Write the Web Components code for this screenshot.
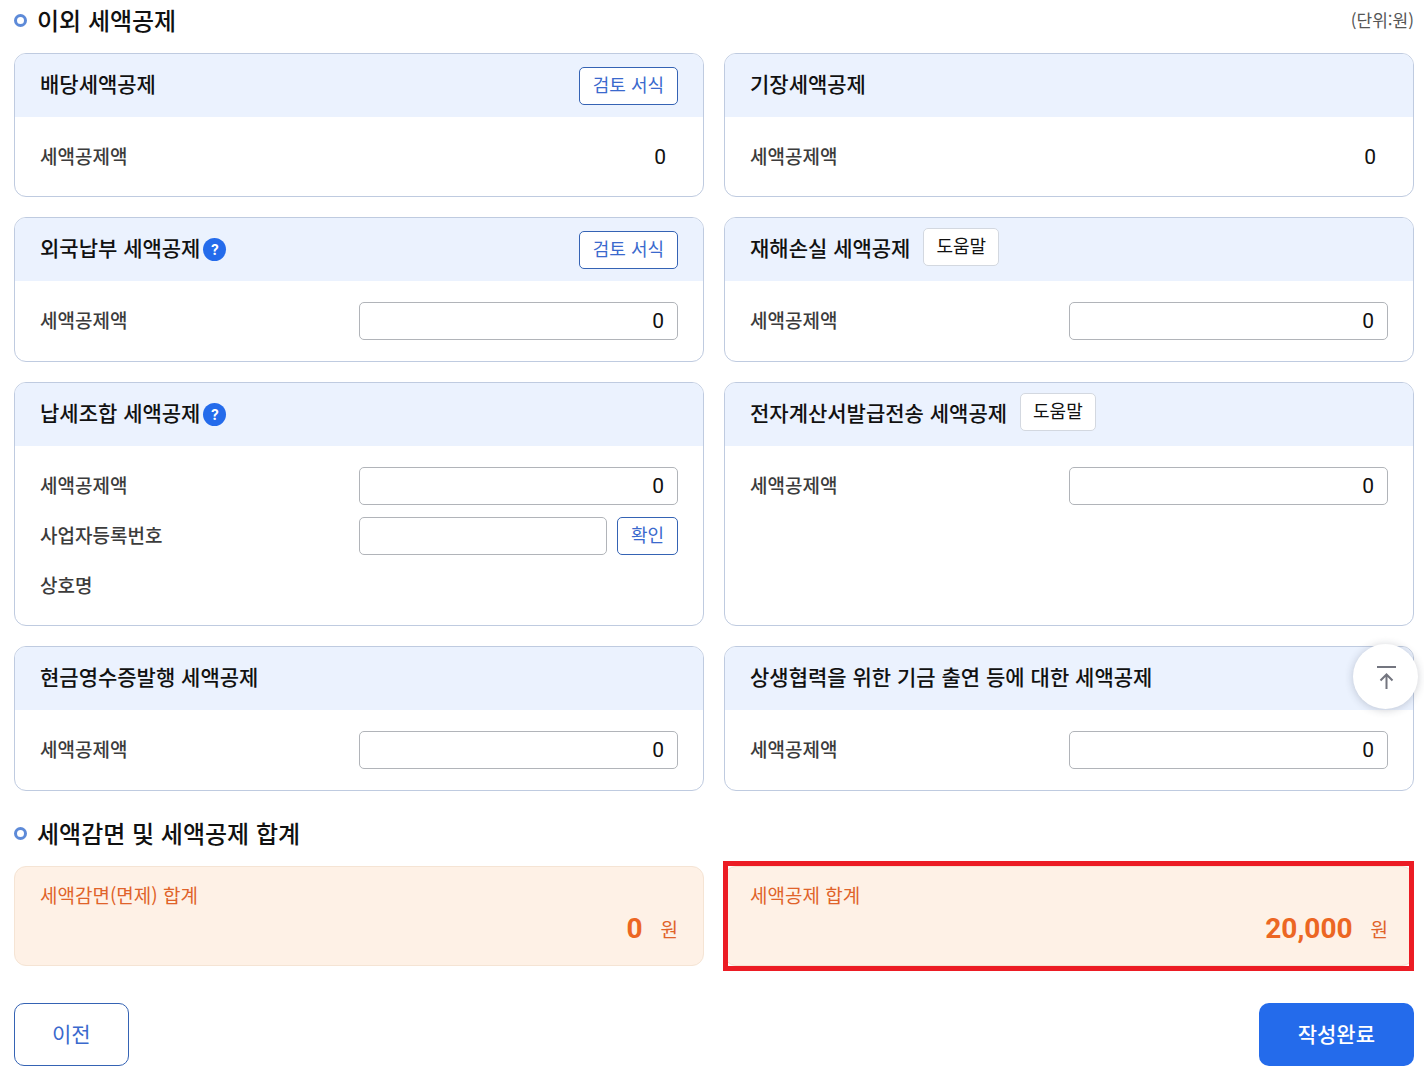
<!DOCTYPE html>
<html lang="ko">
<head>
<meta charset="utf-8">
<meta name="viewport" content="width=device-width, initial-scale=1">
<title>세액공제</title>
<style>
html, body { margin: 0; background: #fff; }
body { font-family: "Noto Sans CJK KR", sans-serif; color: #111; }
</style>
</head>
<body>
<tax-page></tax-page>
<script>
const define = (name, html, setup) => {
  const template = document.createElement('template');
  template.innerHTML = '<style>*,*::before,*::after{box-sizing:border-box}</style>' + html;
  customElements.define(name, class extends HTMLElement {
    constructor() {
      super();
      this.attachShadow({ mode: 'open' }).append(template.content.cloneNode(true));
    }
    connectedCallback() {
      if (setup && !this.ready) { this.ready = true; setup(this, this.shadowRoot); }
    }
  });
};

define('section-title', `
<style>
:host { display: flex; align-items: center; justify-content: space-between; height: 34px; margin-bottom: 16px; }
h2 { display: flex; align-items: center; gap: 10px; margin: 0; font-size: 24px; line-height: 34px; font-weight: 500; }
h2::before { content: ""; width: 13px; height: 13px; border: 3px solid #5d8ad8; border-radius: 50%; }
div { font-size: 17px; line-height: 24px; color: #555; }
</style>
<h2><slot></slot></h2><div><slot name="note"></slot></div>`);

define('ui-button', `
<style>
:host { display: block; flex: none; }
button { display: block; height: 38px; padding: 0 13px 4px; border: 1px solid #3563b4; border-radius: 5px; background: #fff; color: #3a69cd; font-family: inherit; font-size: 18px; line-height: 26px; font-weight: 400; white-space: nowrap; cursor: pointer; }
:host([kind="help"]) button { padding: 0 12px 4px; border-color: #d3d8e0; color: #111; }
:host([kind="prev"]) button { height: 63px; padding: 0 37px 4px; border-radius: 10px; font-size: 21px; }
:host([kind="primary"]) button { height: 63px; padding: 0 39px 4px; border: 0; border-radius: 10px; background: #246beb; color: #fff; font-size: 21px; font-weight: 500; }
</style>
<button type="button"><slot></slot></button>`);

define('help-dot', `
<style>
:host { display: block; margin-left: 3px; }
button { display: block; width: 23px; height: 23px; padding: 0; border: 0; border-radius: 50%; background: #246beb; color: #fff; font: 700 14px/23px Inter, sans-serif; text-align: center; cursor: pointer; }
</style>
<button type="button">?</button>`);

define('tax-card', `
<style>
:host { display: flex; flex-direction: column; border: 1px solid #bfcbe0; border-radius: 12px; background: #fff; overflow: hidden; }
header { display: flex; align-items: center; height: 63px; padding: 0 25px; background: #ebf2fe; }
h3 { margin: 0; padding-bottom: 6px; font-size: 21px; line-height: 30px; font-weight: 500; white-space: nowrap; }
.end { margin-left: auto; }
.body { display: flex; flex-direction: column; gap: 12px; padding: 21px 25px; }
::slotted([slot="info"][kind="help"]) { margin: 0 0 6px 13px; }
</style>
<header><h3></h3><slot name="info"></slot><div class="end"><slot name="action"></slot></div></header>
<div class="body"><slot></slot></div>`, (host, root) => {
  root.querySelector('h3').textContent = host.getAttribute('heading');
});

define('tax-field', `
<style>
:host { display: grid; grid-template-columns: 1fr 1fr; align-items: center; min-height: 37px; }
label { padding-bottom: 2px; font-size: 19px; line-height: 28px; font-weight: 500; color: #3c3c3c; }
.control { display: flex; gap: 10px; }
input { flex: 1; width: 100%; min-width: 0; height: 38px; margin: 0; padding: 0 13px; border: 1px solid #b1b4b9; border-radius: 5px; background: #fff; color: #111; font-family: Roboto, sans-serif; font-size: 21px; text-align: right; outline: 0; }
output { flex: 1; padding-right: 12px; text-align: right; font-family: Roboto, sans-serif; font-size: 21px; line-height: 30px; }
</style>
<label for="value"></label><div class="control"></div>`, (host, root) => {
  root.querySelector('label').textContent = host.getAttribute('label');
  const control = root.querySelector('.control');
  const value = document.createElement(host.getAttribute('type') || 'input');
  value.id = 'value';
  value.value = host.getAttribute('value') || '';
  control.append(value, document.createElement('slot'));
});

define('sum-card', `
<style>
:host { display: block; position: relative; padding: 14px 25px 16px; border: 1px solid #f5e4d4; border-radius: 12px; background: #fef1e6; color: #e0632a; font-size: 19px; }
:host([marked])::after { content: ""; position: absolute; inset: -6px -1px -6px -2px; border: 5px solid #ec1c24; pointer-events: none; }
.label { line-height: 28px; }
.amount { display: flex; align-items: center; justify-content: flex-end; gap: 18px; line-height: 40px; }
strong { font-family: Roboto, sans-serif; font-size: 28px; font-weight: 700; color: #ec6623; }
</style>
<div class="label"></div><div class="amount"><strong><slot></slot></strong><span>원</span></div>`, (host, root) => {
  root.querySelector('.label').textContent = host.getAttribute('label');
});

define('top-button', `
<style>
:host { position: fixed; right: 6px; bottom: 364px; }
button { display: grid; place-items: center; width: 65px; height: 65px; padding: 0; border: 0; border-radius: 50%; background: #fff; box-shadow: 0 1px 8px rgba(40, 50, 70, .24); cursor: pointer; }
</style>
<button type="button" aria-label="맨 위로"><svg width="24" height="28" viewBox="0 0 24 28" fill="none" stroke="#73757f" stroke-width="2"><path d="M3 4h19M12.500 26V11.500M6.500 17.500l6-6 6 6"/></svg></button>`);

define('tax-page', `
<style>
:host { display: block; padding: 3px 10px 7px 14px; }
.grid { display: grid; grid-template-columns: 1fr 1fr; gap: 20px; }
.total { margin-top: 25px; }
footer { display: flex; justify-content: space-between; margin-top: 37px; }
</style>
<main>
  <section>
    <section-title>이외 세액공제<span slot="note">(단위:원)</span></section-title>
    <div class="grid">
      <tax-card heading="배당세액공제"><ui-button slot="action">검토 서식</ui-button><tax-field type="output" label="세액공제액" value="0"></tax-field></tax-card>
      <tax-card heading="기장세액공제"><tax-field type="output" label="세액공제액" value="0"></tax-field></tax-card>
      <tax-card heading="외국납부 세액공제"><help-dot slot="info"></help-dot><ui-button slot="action">검토 서식</ui-button><tax-field label="세액공제액" value="0"></tax-field></tax-card>
      <tax-card heading="재해손실 세액공제"><ui-button slot="info" kind="help">도움말</ui-button><tax-field label="세액공제액" value="0"></tax-field></tax-card>
      <tax-card heading="납세조합 세액공제"><help-dot slot="info"></help-dot>
        <tax-field label="세액공제액" value="0"></tax-field>
        <tax-field label="사업자등록번호"><ui-button>확인</ui-button></tax-field>
        <tax-field type="output" label="상호명"></tax-field>
      </tax-card>
      <tax-card heading="전자계산서발급전송 세액공제"><ui-button slot="info" kind="help">도움말</ui-button><tax-field label="세액공제액" value="0"></tax-field></tax-card>
      <tax-card heading="현금영수증발행 세액공제"><tax-field label="세액공제액" value="0"></tax-field></tax-card>
      <tax-card heading="상생협력을 위한 기금 출연 등에 대한 세액공제"><tax-field label="세액공제액" value="0"></tax-field></tax-card>
    </div>
  </section>
  <section class="total">
    <section-title>세액감면 및 세액공제 합계</section-title>
    <div class="grid">
      <sum-card label="세액감면(면제) 합계">0</sum-card>
      <sum-card label="세액공제 합계" marked>20,000</sum-card>
    </div>
  </section>
  <footer><ui-button kind="prev">이전</ui-button><ui-button kind="primary">작성완료</ui-button></footer>
</main>
<top-button></top-button>`);
</script>
</body>
</html>
